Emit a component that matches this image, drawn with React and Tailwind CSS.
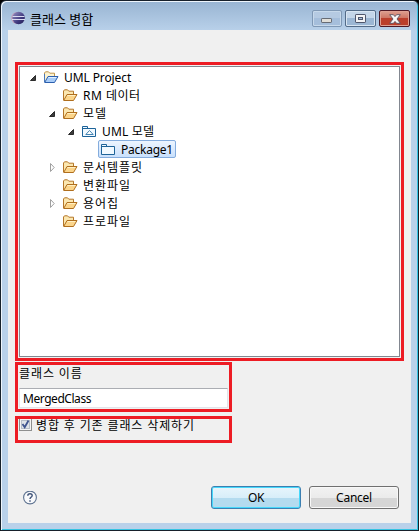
import React from "react";

const latin = "font-['Noto_Sans','Noto_Sans_CJK_KR',sans-serif]";

function OpenFolder({ root }) {
  return (
    <svg width="16" height="14" viewBox="0 0 16 14" className="shrink-0">
      <path d="M1.5 12V3L2.5 1.8H5.5L6.8 3.2H11.5V6.5" fill={root ? "#fdf3d0" : "#fbe7b0"} stroke={root ? "#c0954c" : "#b5772a"} />
      {root && <path d="M1.5 12V4" stroke="#4a78b8" />}
      <path d="M1.7 12.5L5 6.5H15L11.5 12.5Z" fill={root ? "#a9cdf8" : "#fbd58b"} stroke={root ? "#2b5fae" : "#b06f1e"} strokeLinejoin="round" />
      <path d="M5.5 7.5H13.4" stroke={root ? "#e0efff" : "#fff0c4"} />
    </svg>
  );
}

function UmlFolder({ model }) {
  return (
    <svg width="16" height="14" viewBox="0 0 16 14" className="shrink-0">
      <path d="M1.5 12.5V2.5H6.5V4.5H14.5V12.5Z" fill="#f1f9ff" stroke="#1d6399" />
      <path d="M1.5 4.5H7" stroke="#1d6399" />
      {model && <path d="M4.8 10.5L8.5 6.5L12.2 10.5Z" fill="#fff" stroke="#2f77aa" strokeWidth="0.9" />}
    </svg>
  );
}

function Arrow({ state }) {
  return (
    <svg width="8" height="10" viewBox="0 0 8 10" className="shrink-0">
      {state === "open" && <path d="M6.5 3.5V8.5H1.5Z" fill="#3c3c3c" stroke="#1e1e1e" strokeWidth="0.9" />}
      {state === "closed" && <path d="M2.5 1.5L6.2 5.5L2.5 9.5Z" fill="#fff" stroke="#a0a0a0" />}
    </svg>
  );
}

const rows = [
  { label: "UML Project", state: "open", icon: "root", indent: "pl-[9px]", tracking: "tracking-[-0.1px]" },
  { label: "RM 데이터", icon: "folder", indent: "pl-[28px]", tracking: "tracking-[0.5px]" },
  { label: "모델", state: "open", icon: "folder", indent: "pl-[28px]", tracking: "tracking-[0.9px]" },
  { label: "UML 모델", state: "open", icon: "model", indent: "pl-[47px]", tracking: "tracking-[0.2px]" },
  { label: "Package1", icon: "package", indent: "pl-[66px]", tracking: "tracking-[-0.25px]", selected: true },
  { label: "문서템플릿", state: "closed", icon: "folder", indent: "pl-[28px]", tracking: "tracking-[0.95px]" },
  { label: "변환파일", icon: "folder", indent: "pl-[28px]", tracking: "tracking-[0.95px]" },
  { label: "용어집", state: "closed", icon: "folder", indent: "pl-[28px]", tracking: "tracking-[0.95px]" },
  { label: "프로파일", icon: "folder", indent: "pl-[28px]", tracking: "tracking-[0.95px]" },
];

function TreeRow({ row }) {
  return (
    <div className={`flex h-[18px] items-center ${row.indent}`}>
      <Arrow state={row.state} />
      <div
        className={`ml-[4px] flex h-[18px] items-center gap-[4px] rounded-[2px] border pl-px pr-[2px] ${
          row.selected ? "border-[#84acdd] bg-linear-to-b from-[#edf5ff] to-[#c9e0fc]" : "border-transparent"
        }`}
      >
        {row.icon === "root" && <OpenFolder root />}
        {row.icon === "folder" && <OpenFolder />}
        {row.icon === "model" && <UmlFolder model />}
        {row.icon === "package" && <UmlFolder />}
        <span className={`pl-px pt-px text-[12px] leading-[16px] whitespace-nowrap ${row.tracking}`}>{row.label}</span>
      </div>
    </div>
  );
}

function TitleBar() {
  return (
    <header className="flex h-[28px] shrink-0 items-start pl-[9px] pr-[7px]">
      <svg width="14" height="14" viewBox="0 0 14 14" className="mt-[9px] shrink-0">
        <defs>
          <linearGradient id="ball" x1="0" x2="1" y1="0" y2="1">
            <stop offset="0" stopColor="#9a93c4" />
            <stop offset="0.6" stopColor="#403a80" />
            <stop offset="1" stopColor="#1f1b52" />
          </linearGradient>
        </defs>
        <circle cx="6.2" cy="7" r="6" fill="#c5a0b8" />
        <circle cx="7.6" cy="7" r="6.2" fill="url(#ball)" />
        <path d="M1.5 5.5H13.5M1 8.5H14" stroke="#dcdcf2" />
      </svg>
      <span className="ml-[5px] mt-[8px] flex-1 text-[13px] leading-[18px]">클래스 병합</span>
      <div className="mt-[8px] flex gap-[3px]">
        <div className="flex h-[17px] w-[30px] items-center justify-center rounded-[2px] border border-[#7f98b5] bg-linear-to-b from-[#b5cae2] from-50% to-[#a5bedb] to-50% shadow-[inset_0_0_0_1px_#c7d9eb]">
          <svg width="12" height="6" viewBox="0 0 12 6" className="mt-[4px]">
            <rect x="0.5" y="0.5" width="10" height="4" rx="0.6" fill="#e0ded8" stroke="#666b74" />
          </svg>
        </div>
        <div className="flex h-[17px] w-[31px] items-center justify-center rounded-[2px] border border-[#536b88] bg-linear-to-b from-[#c4d6e9] from-50% to-[#9cb7d4] to-50% shadow-[inset_0_0_0_1px_#d8e5f2]">
          <svg width="11" height="9" viewBox="0 0 11 9">
            <rect x="0.5" y="0.5" width="10" height="8" rx="0.6" fill="#f2f3f5" stroke="#4f566c" />
            <rect x="3.5" y="3.5" width="4" height="2" fill="#a7bfdc" stroke="#4f566c" />
          </svg>
        </div>
        <div className="flex h-[17px] w-[31px] items-center justify-center rounded-[2px] border border-[#4e1825] bg-linear-to-b from-[#dda091] from-0% via-[#ce7766] via-45% to-[#bb3f2c] to-50% shadow-[inset_0_0_0_1px_#dfa092]">
          <svg width="12" height="10" viewBox="0 0 12 10">
            <path d="M0.7 0.7H4.4L6 2.6L7.6 0.7H11.3L8 5L11.3 9.3H7.6L6 7.4L4.4 9.3H0.7L4 5Z" fill="#f8f8f8" stroke="#5a5262" strokeWidth="0.9" />
          </svg>
        </div>
      </div>
    </header>
  );
}

export default function App() {
  return (
    <div className="h-[531px] w-[419px] bg-black text-black">
      <div
        className={`flex h-[531px] w-[419px] flex-col rounded-t-[6px] border border-[#17202b] bg-linear-to-b from-[#98b4d2] to-[#b9d1ea] to-[30px] p-px shadow-[inset_1px_1px_0_#eef5fc,inset_-1px_-1px_0_#35c3e2] ${latin}`}
      >
        <TitleBar />
        <main className="mx-[6px] mb-[6px] flex flex-1 flex-col bg-[#f0f0f0] pl-[7px] pr-[7px] pt-[32px]">
          <section className="h-[299px] w-[389px] shrink-0 border-[3px] border-[#ed1c24] p-px">
            <div className="h-full border border-[#828790] bg-white pt-px">
              {rows.map((row) => (
                <TreeRow key={row.label} row={row} />
              ))}
            </div>
          </section>
          <section className="mt-px h-[50px] w-[217px] shrink-0 border-[3px] border-[#ed1c24] px-px">
            <div className="h-[23px] text-[12px] leading-[18px] tracking-[0.9px]">클래스 이름</div>
            <div className="h-[20px] w-[209px] border border-[#e2e3ea] border-t-[#abadb3] bg-white pl-[3px] text-[12px] leading-[19px] tracking-[-0.45px]">MergedClass</div>
          </section>
          <section className="mt-[4px] flex h-[27px] w-[217px] shrink-0 items-start border-[3px] border-[#ed1c24] pl-px">
            <svg width="13" height="13" viewBox="0 0 13 13" className="shrink-0">
              <rect x="0.5" y="-0.5" width="12" height="12" fill="#f4f4f4" stroke="#8e8f8f" />
              <rect x="2.5" y="1.5" width="8" height="8" fill="#dfe3e8" stroke="#b8bfc8" />
              <path d="M3.5 5L5.7 8.3L9.5 1.5" fill="none" stroke="#40558f" strokeWidth="1.8" />
            </svg>
            <span className="ml-[4px] text-[12px] leading-[14px] tracking-[0.87px] whitespace-nowrap">병합 후 기존 클래스 삭제하기</span>
          </section>
          <footer className="mt-[43px] flex h-[23px] items-center pl-[8px]">
            <svg width="14" height="14" viewBox="0 0 14 14" className="mr-[174px] shrink-0">
              <circle cx="7" cy="6.5" r="6.4" fill="#f8f9fb" stroke="#5d7290" strokeWidth="1.1" />
              <path d="M4.8 4.8Q4.8 2.7 7 2.7Q9.2 2.7 9.2 4.5Q9.2 5.6 7.9 6.3Q7 6.8 7 8M7 9.2V10.7" fill="none" stroke="#3e5277" strokeWidth="1.4" />
            </svg>
            <button className="h-[23px] w-[90px] shrink-0 rounded-[3px] border border-[#3c7fb1] bg-linear-to-b from-[#e8f5fc] from-0% via-[#d8eef9] via-50% to-[#b4dbef] to-50% text-[12px] leading-[20px] tracking-[-0.3px] shadow-[inset_0_0_0_1px_#46d8fb]">OK</button>
            <button className="ml-[8px] h-[23px] w-[90px] shrink-0 rounded-[3px] border border-[#707070] bg-linear-to-b from-[#f2f2f2] from-0% via-[#ebebeb] via-50% to-[#d6d6d6] to-50% text-[12px] leading-[20px] tracking-[-0.25px] shadow-[inset_0_0_0_1px_#f8f8f8]">Cancel</button>
          </footer>
        </main>
      </div>
    </div>
  );
}
